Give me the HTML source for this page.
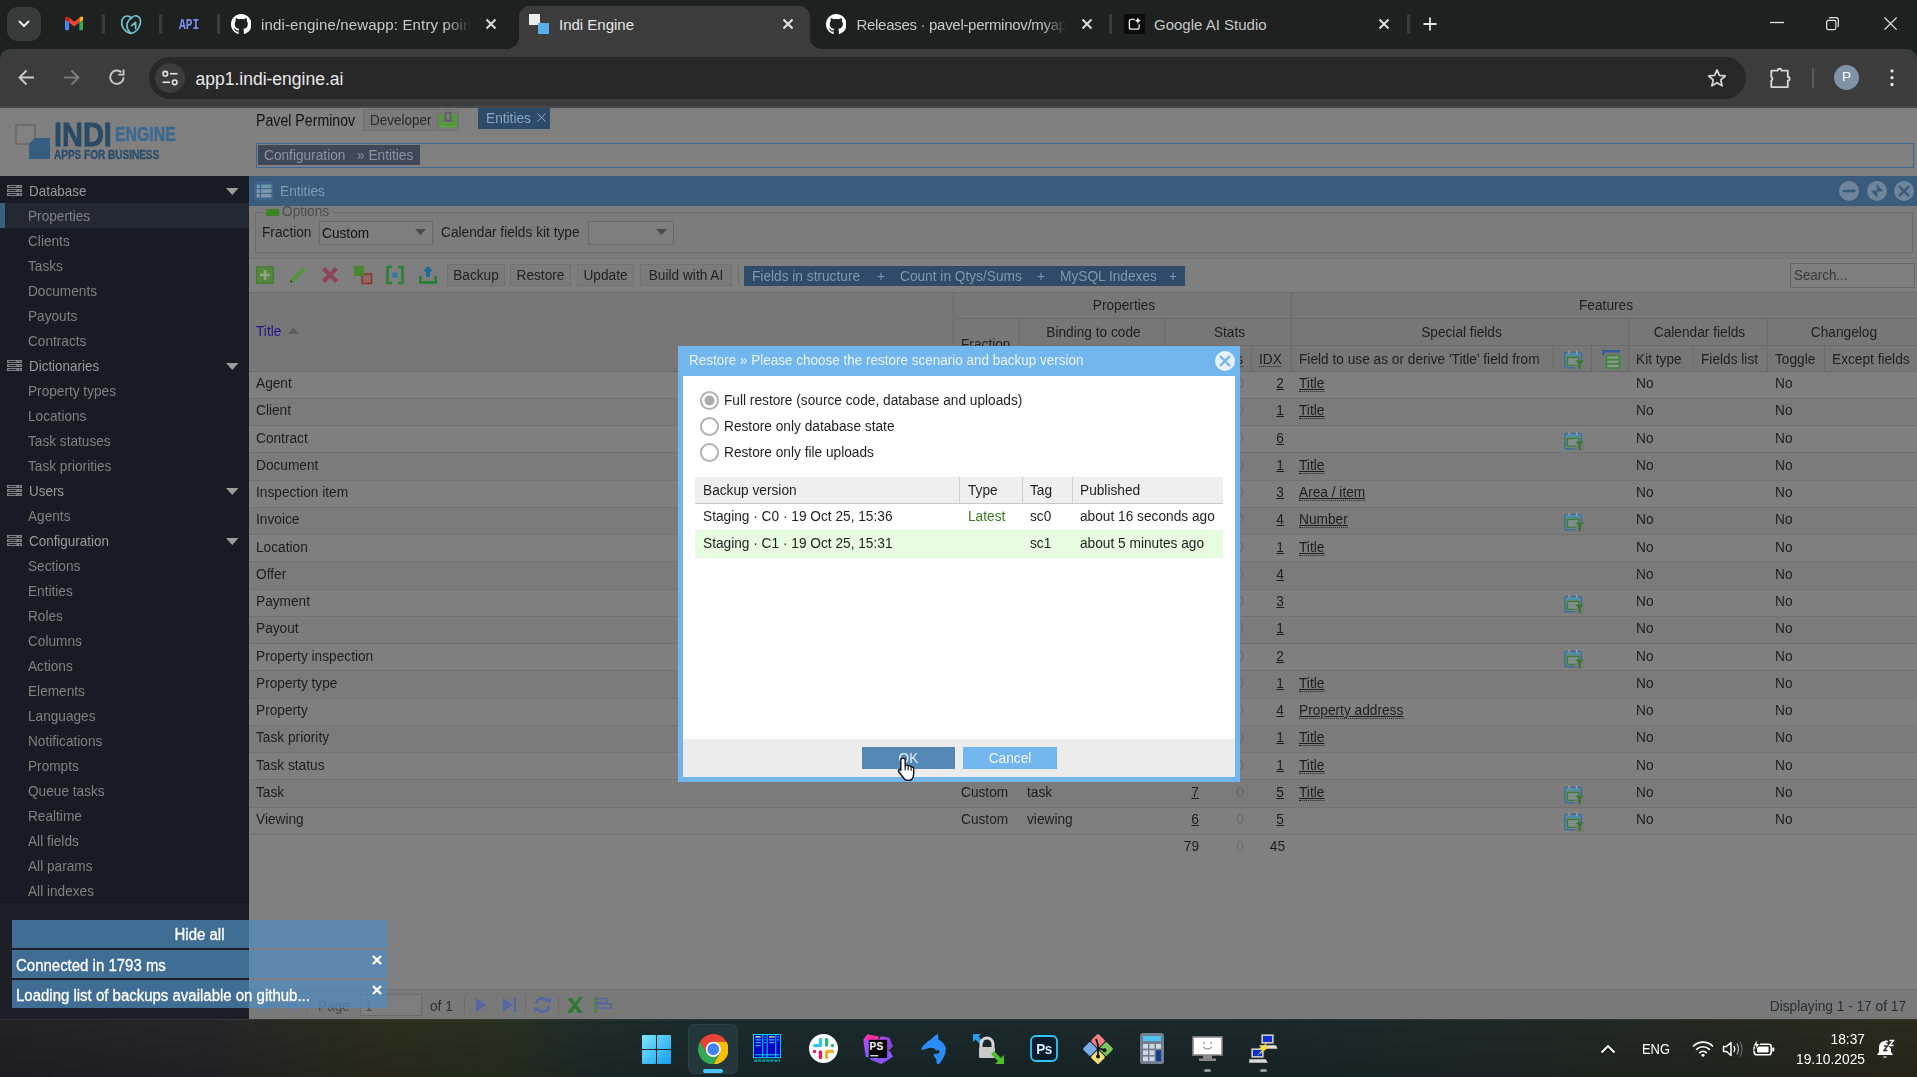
<!DOCTYPE html>
<html lang="en"><head><meta charset="utf-8"><title>Indi Engine</title>
<style>
*{box-sizing:border-box;margin:0;padding:0}
html,body{width:1917px;height:1077px;overflow:hidden;background:#808080}
body{position:relative;font-family:"Liberation Sans",sans-serif;font-size:14px;letter-spacing:0;color:#1e1e1e}
.abs,.abs *{position:absolute}
div,span,svg{position:absolute}
.t{white-space:nowrap;line-height:20px;height:20px;transform:scaleX(.978);transform-origin:0 50%}
.t[style*="text-align:center"]{transform-origin:50% 50%}
.t[style*="text-align:right"]{transform-origin:100% 50%}
/* chrome */
#tabstrip{left:0;top:0;width:1917px;height:49px;background:#1f2020}
#toolbar{left:0;top:49px;width:1917px;height:59px;background:#3c3c3c}
.ct{font-size:15px;letter-spacing:0;color:#c7c7c7;white-space:nowrap;line-height:20px;height:20px;overflow:hidden}
.tdiv{width:3px;height:20px;top:14px;background:#3b3d3d;border-radius:1.5px}
/* app */
#app{left:0;top:0;width:1917px;height:1019px;background:#808080;overflow:hidden}
#side{left:0;top:176px;width:249px;height:843px;background:#181b23}
.sg{left:0;width:249px;height:27px;background:#161922}
.sg .t,.si .t{color:#8c8c8c;font-size:15px}
.si{left:0;width:249px;height:25px}
.sgt{color:#9a9a9a;font-size:14.6px;transform:scaleX(.92)}
.sit{color:#808080;font-size:14.6px;transform:scaleX(.935)}
.h{color:#202020}
.c{color:#1d1d1d}
.bt{color:#8098ae}
.d{color:#1f1f1f}
.toast{background:rgba(78,140,190,.72)}
.tt{color:#fff;font-size:16px;transform:scaleX(.936);-webkit-text-stroke:.3px #fff}
.tb{color:#fff;font-size:14.5px;transform:scaleX(.95)}
u{text-decoration:underline}
</style></head><body>
<div id="app">
<div style="left:15px;top:124px;width:21px;height:21px;border:2px solid #6c6c6c;background:#818181"></div>
<div style="left:29px;top:138px;width:21px;height:21px;background:#365e82;clip-path:polygon(28% 0,100% 0,100% 100%,0 100%,0 28%)"></div>
<div class="t lg" style="left:54px;top:119px;font-size:34px;line-height:30px;height:30px;font-weight:bold;color:#2a4a66;-webkit-text-stroke:.9px #2a4a66;letter-spacing:0;transform:scaleX(.85);transform-origin:0 0">INDI</div>
<div class="t lg" style="left:115px;top:124px;font-size:21px;line-height:20px;height:20px;font-weight:bold;color:#3a6890;-webkit-text-stroke:.5px #3a6890;letter-spacing:0;transform:scaleX(.755);transform-origin:0 0">ENGINE</div>
<div class="t lg" style="left:54px;top:148px;font-size:12px;line-height:14px;height:14px;font-weight:bold;color:#2b4d6a;-webkit-text-stroke:.35px #2b4d6a;letter-spacing:0;transform:scaleX(.835);transform-origin:0 0">APPS FOR BUSINESS</div>
<div id="side"></div>
<svg style="left:7px;top:185px" width="15" height="11" viewBox="0 0 15 11"><g fill="#808080"><rect x="0" y="0" width="15" height="3"/><rect x="0" y="4" width="15" height="3"/><rect x="0" y="8" width="15" height="3"/></g><path d="M1.6 1.5H9.4M12 1.5H13.2M1.6 5.5H9.4M12 5.5H13.2M1.6 9.5H9.4M12 9.5H13.2" stroke="#1c1f27" stroke-width="1"/></svg>
<div class="t sgt" style="left:29px;top:181px">Database</div>
<svg style="left:225.5px;top:187.5px" width="12.5" height="7" viewBox="0 0 12.5 7"><path d="M0 0H12.5L6.25 7Z" fill="#9c9c9c"/></svg>
<div class="si" style="top:203px;background:#242832"></div><div style="left:0;top:203px;width:5px;height:25px;background:#3a6080"></div>
<div class="t sit" style="left:28px;top:205.5px">Properties</div>
<div class="t sit" style="left:28px;top:230.5px">Clients</div>
<div class="t sit" style="left:28px;top:255.5px">Tasks</div>
<div class="t sit" style="left:28px;top:280.5px">Documents</div>
<div class="t sit" style="left:28px;top:305.5px">Payouts</div>
<div class="t sit" style="left:28px;top:330.5px">Contracts</div>
<svg style="left:7px;top:360px" width="15" height="11" viewBox="0 0 15 11"><g fill="#808080"><rect x="0" y="0" width="15" height="3"/><rect x="0" y="4" width="15" height="3"/><rect x="0" y="8" width="15" height="3"/></g><path d="M1.6 1.5H9.4M12 1.5H13.2M1.6 5.5H9.4M12 5.5H13.2M1.6 9.5H9.4M12 9.5H13.2" stroke="#1c1f27" stroke-width="1"/></svg>
<div class="t sgt" style="left:29px;top:356px">Dictionaries</div>
<svg style="left:225.5px;top:362.5px" width="12.5" height="7" viewBox="0 0 12.5 7"><path d="M0 0H12.5L6.25 7Z" fill="#9c9c9c"/></svg>
<div class="t sit" style="left:28px;top:380.5px">Property types</div>
<div class="t sit" style="left:28px;top:405.5px">Locations</div>
<div class="t sit" style="left:28px;top:430.5px">Task statuses</div>
<div class="t sit" style="left:28px;top:455.5px">Task priorities</div>
<svg style="left:7px;top:485px" width="15" height="11" viewBox="0 0 15 11"><g fill="#808080"><rect x="0" y="0" width="15" height="3"/><rect x="0" y="4" width="15" height="3"/><rect x="0" y="8" width="15" height="3"/></g><path d="M1.6 1.5H9.4M12 1.5H13.2M1.6 5.5H9.4M12 5.5H13.2M1.6 9.5H9.4M12 9.5H13.2" stroke="#1c1f27" stroke-width="1"/></svg>
<div class="t sgt" style="left:29px;top:481px">Users</div>
<svg style="left:225.5px;top:487.5px" width="12.5" height="7" viewBox="0 0 12.5 7"><path d="M0 0H12.5L6.25 7Z" fill="#9c9c9c"/></svg>
<div class="t sit" style="left:28px;top:505.5px">Agents</div>
<svg style="left:7px;top:535px" width="15" height="11" viewBox="0 0 15 11"><g fill="#808080"><rect x="0" y="0" width="15" height="3"/><rect x="0" y="4" width="15" height="3"/><rect x="0" y="8" width="15" height="3"/></g><path d="M1.6 1.5H9.4M12 1.5H13.2M1.6 5.5H9.4M12 5.5H13.2M1.6 9.5H9.4M12 9.5H13.2" stroke="#1c1f27" stroke-width="1"/></svg>
<div class="t sgt" style="left:29px;top:531px">Configuration</div>
<svg style="left:225.5px;top:537.5px" width="12.5" height="7" viewBox="0 0 12.5 7"><path d="M0 0H12.5L6.25 7Z" fill="#9c9c9c"/></svg>
<div class="t sit" style="left:28px;top:555.5px">Sections</div>
<div class="t sit" style="left:28px;top:580.5px">Entities</div>
<div class="t sit" style="left:28px;top:605.5px">Roles</div>
<div class="t sit" style="left:28px;top:630.5px">Columns</div>
<div class="t sit" style="left:28px;top:655.5px">Actions</div>
<div class="t sit" style="left:28px;top:680.5px">Elements</div>
<div class="t sit" style="left:28px;top:705.5px">Languages</div>
<div class="t sit" style="left:28px;top:730.5px">Notifications</div>
<div class="t sit" style="left:28px;top:755.5px">Prompts</div>
<div class="t sit" style="left:28px;top:780.5px">Queue tasks</div>
<div class="t sit" style="left:28px;top:805.5px">Realtime</div>
<div class="t sit" style="left:28px;top:830.5px">All fields</div>
<div class="t sit" style="left:28px;top:855.5px">All params</div>
<div class="t sit" style="left:28px;top:880.5px">All indexes</div>
<div style="left:0;top:903px;width:249px;height:116px;background:#1c1f28"></div>
<div class="t" style="left:256px;top:111px;color:#131313;font-size:16px;transform:scaleX(.885)">Pavel Perminov</div>
<div style="left:363px;top:109px;width:96px;height:22px;border:1px solid #717171;background:#7a7a7a"></div>
<div class="t" style="left:370px;top:110px;color:#2a2a2a;transform:scaleX(.964)">Developer</div>
<div style="left:437px;top:110px;width:1px;height:20px;background:#747474"></div>
<svg style="left:439px;top:111px" width="18" height="18" viewBox="0 0 18 18"><path d="M0 3.5H4.6V12H13.4V3.5H18V16.5H0Z" fill="#4f9b36"/><path d="M1 15.5H17" stroke="#66aa4e" stroke-width="1"/><rect x="6.3" y="1.3" width="5.4" height="8.6" fill="#6d6d6d" stroke="#585858" stroke-width="1"/><rect x="8.2" y="2.6" width="1.6" height="5.6" fill="#848484"/></svg>
<div style="left:478px;top:108px;width:72px;height:21px;background:#2c4b67"></div>
<div class="t" style="left:485.5px;top:108px;color:#8aa5bd">Entities</div>
<svg style="left:536.5px;top:112.5px" width="9" height="9" viewBox="0 0 9 9"><path d="M.5 .5L8.5 8.5M8.5 .5L.5 8.5" stroke="#8ea6bb" stroke-width="1"/></svg>
<div style="left:256px;top:143px;width:1658px;height:25px;border:1px solid #3c6896"></div>
<div style="left:258px;top:145px;width:162px;height:20px;background:#404757"></div>
<div class="t" style="left:264px;top:144.5px;color:#8c94a2">Configuration</div>
<div class="t" style="left:356.5px;top:144.5px;color:#8c94a2">» Entities</div>
<div style="left:249px;top:176px;width:1668px;height:30px;background:#395c7c"></div>
<svg style="left:255px;top:182px" width="18" height="18" viewBox="0 0 18 18"><rect x=".5" y=".5" width="17" height="17" rx="1" fill="#40628a" stroke="#456797"/><g fill="#8197ae"><rect x="1.6" y="2.6" width="3.2" height="3.6" fill="#6f96a6"/><rect x="6" y="2.6" width="10.4" height="3.6" fill="#6f96a6"/><rect x="1.6" y="7.3" width="3.2" height="3.6"/><rect x="6" y="7.3" width="10.4" height="3.6"/><rect x="1.6" y="12" width="3.2" height="3.6"/><rect x="6" y="12" width="10.4" height="3.6"/></g></svg>
<div class="t" style="left:280px;top:181px;color:#7f9cb7">Entities</div>
<svg style="left:1838px;top:180px" width="22" height="22" viewBox="0 0 22 22"><circle cx="11" cy="11" r="10" fill="#70859b"/><rect x="4.5" y="9.7" width="13" height="2.6" fill="#395c7c"/></svg>
<svg style="left:1866px;top:180px" width="22" height="22" viewBox="0 0 22 22"><circle cx="11" cy="11" r="10" fill="#70859b"/><path d="M11 4.2 L16.8 11 L11 11 Z M11 17.8 L5.2 11 L11 11 Z" fill="#395c7c"/><path d="M11 4.2V17.8M5.2 11H16.8" stroke="#395c7c" stroke-width=".7"/></svg>
<svg style="left:1893px;top:180px" width="22" height="22" viewBox="0 0 22 22"><circle cx="11" cy="11" r="10" fill="#70859b"/><path d="M6 6L16 16M16 6L6 16" stroke="#395c7c" stroke-width="2.4"/></svg>
<div style="left:249px;top:206px;width:1668px;height:52px;background:#7c7c7c"></div><div style="left:255px;top:212px;width:1658px;height:41px;border:1px solid #6c6c6c"></div>
<div style="left:262px;top:207px;width:72px;height:12px;background:#7c7c7c"></div>
<div style="left:266px;top:209px;width:13px;height:7px;background:#3f8527"></div>
<div class="t" style="left:282px;top:201px;color:#4e4e4e">Options</div>
<div class="t" style="left:262px;top:222px;color:#1c1c1c">Fraction</div>
<div style="left:319px;top:221px;width:114px;height:24px;border:1px solid #6a6a6a;background:#7e7e7e"></div>
<div class="t" style="left:322px;top:223px;color:#111">Custom</div>
<svg style="left:414.8px;top:229.3px" width="11" height="6" viewBox="0 0 11 6"><path d="M0 0H11L5.5 6Z" fill="#4a4a4a"/></svg>
<div class="t" style="left:441px;top:222px;color:#1c1c1c">Calendar fields kit type</div>
<div style="left:588px;top:221px;width:86px;height:24px;border:1px solid #6a6a6a;background:#7e7e7e"></div>
<svg style="left:656px;top:229px" width="11" height="6" viewBox="0 0 11 6"><path d="M0 0H11L5.5 6Z" fill="#4a4a4a"/></svg>
<div style="left:249px;top:258px;width:1668px;height:1px;background:#737373"></div>
<div style="left:249px;top:259px;width:1668px;height:33px;background:#7f7f7f"></div>
<div style="left:249px;top:292px;width:1668px;height:1px;background:#707070"></div>
<svg style="left:256px;top:266px" width="18" height="18" viewBox="0 0 18 18"><rect width="18" height="18" rx="1" fill="#4c7a3a"/><rect x="1.5" y="1.5" width="15" height="15" fill="#56873f"/><path d="M9 4V14M4 9H14" stroke="#8fa883" stroke-width="2.6"/></svg>
<svg style="left:289px;top:266px" width="18" height="18" viewBox="0 0 18 18"><path d="M2.5 15.5 L15 3" stroke="#56913b" stroke-width="4"/><path d="M1.2 16.4 L3.6 15.8 L1.9 14.1Z" fill="#222"/></svg>
<svg style="left:321px;top:266px" width="18" height="18" viewBox="0 0 18 18"><path d="M2.5 2.5L15.5 15.5M15.5 2.5L2.5 15.5" stroke="#8c4457" stroke-width="4"/></svg>
<svg style="left:353px;top:265px" width="20" height="20" viewBox="0 0 20 20"><rect x="9" y="9" width="9.5" height="9.5" fill="#936666" stroke="#8a3327" stroke-width="1.4"/><rect x="1" y="1" width="10" height="10" fill="#4a872c"/></svg>
<svg style="left:385px;top:265px" width="20" height="20" viewBox="0 0 20 20"><path d="M7 2H2.5V18H7M13 2H17.5V18H13" fill="none" stroke="#2c8139" stroke-width="2.6"/><rect x="7.5" y="7.5" width="5" height="5" fill="#2976a8"/></svg>
<svg style="left:418px;top:265px" width="20" height="20" viewBox="0 0 20 20"><path d="M2.3 11V17.5H17.7V11" fill="none" stroke="#2c8139" stroke-width="2.8"/><path d="M10 1L15 6.5H12V12H8V6.5H5Z" fill="#1b6a9d"/></svg>
<div style="left:447px;top:264px;width:58px;height:22px;border:1px solid #727272;background:#7b7b7b"></div><div class="t" style="left:447px;width:58px;top:265px;text-align:center;color:#222">Backup</div>
<div style="left:510px;top:264px;width:61px;height:22px;border:1px solid #727272;background:#7b7b7b"></div><div class="t" style="left:510px;width:61px;top:265px;text-align:center;color:#222">Restore</div>
<div style="left:577px;top:264px;width:57px;height:22px;border:1px solid #727272;background:#7b7b7b"></div><div class="t" style="left:577px;width:57px;top:265px;text-align:center;color:#222">Update</div>
<div style="left:640px;top:264px;width:92px;height:22px;border:1px solid #727272;background:#7b7b7b"></div><div class="t" style="left:640px;width:92px;top:265px;text-align:center;color:#222">Build with AI</div>
<div style="left:738px;top:266px;width:1px;height:18px;background:#6d6d6d"></div>
<div style="left:744px;top:266px;width:441px;height:20px;background:#2f4b68"></div>
<div class="t bt" style="left:752px;top:266px">Fields in structure</div><div class="t bt" style="left:876.5px;top:266px">+</div>
<div class="t bt" style="left:900px;top:266px">Count in Qtys/Sums</div><div class="t bt" style="left:1036.5px;top:266px">+</div>
<div class="t bt" style="left:1060px;top:266px">MySQL Indexes</div><div class="t bt" style="left:1169px;top:266px">+</div>
<div style="left:1790px;top:263px;width:125px;height:25px;border:1px solid #686868;background:#7e7e7e"></div>
<div class="t" style="left:1794px;top:265px;color:#3a3a3a;transform:scaleX(.954)">Search...</div>
<div style="left:249px;top:293px;width:1668px;height:78px;background:#777777"></div>
<div style="left:249px;top:371px;width:1668px;height:1px;background:#6a6a6a"></div>
<div style="left:953px;top:318px;width:964px;height:1px;background:#6c6c6c"></div>
<div style="left:1019px;top:345px;width:898px;height:1px;background:#6c6c6c"></div>
<div style="left:953px;top:293px;width:1px;height:78px;background:#6c6c6c"></div>
<div style="left:1291px;top:293px;width:1px;height:78px;background:#6c6c6c"></div>
<div style="left:1019px;top:318px;width:1px;height:53px;background:#6c6c6c"></div>
<div style="left:1164px;top:318px;width:1px;height:53px;background:#6c6c6c"></div>
<div style="left:1628px;top:318px;width:1px;height:53px;background:#6c6c6c"></div>
<div style="left:1767px;top:318px;width:1px;height:53px;background:#6c6c6c"></div>
<div style="left:1082px;top:345px;width:1px;height:26px;background:#6c6c6c"></div>
<div style="left:1207px;top:345px;width:1px;height:26px;background:#6c6c6c"></div>
<div style="left:1251px;top:345px;width:1px;height:26px;background:#6c6c6c"></div>
<div style="left:1553px;top:345px;width:1px;height:26px;background:#6c6c6c"></div>
<div style="left:1591px;top:345px;width:1px;height:26px;background:#6c6c6c"></div>
<div style="left:1693px;top:345px;width:1px;height:26px;background:#6c6c6c"></div>
<div style="left:1824px;top:345px;width:1px;height:26px;background:#6c6c6c"></div>
<div class="t h" style="left:256px;top:321px;color:#24128a">Title</div>
<svg style="left:288.3px;top:328.2px" width="11" height="6" viewBox="0 0 11 6"><path d="M0 6H11L5.5 0Z" fill="#5d5d5d"/></svg>
<div class="t h" style="left:955px;width:338px;top:295px;text-align:center;">Properties</div>
<div class="t h" style="left:1293px;width:626px;top:295px;text-align:center;">Features</div>
<div class="t h" style="left:961px;top:334px;">Fraction</div>
<div class="t h" style="left:1021px;width:145px;top:322px;text-align:center;">Binding to code</div>
<div class="t h" style="left:1166px;width:127px;top:322px;text-align:center;">Stats</div>
<div class="t h" style="left:1293px;width:337px;top:322px;text-align:center;">Special fields</div>
<div class="t h" style="left:1630px;width:139px;top:322px;text-align:center;">Calendar fields</div>
<div class="t h" style="left:1769px;width:150px;top:322px;text-align:center;">Changelog</div>
<div class="t h" style="left:1027px;top:349px;">Table</div>
<div class="t h" style="left:1090px;top:349px;">Type</div>
<div class="t h" style="left:1172px;top:349px;">Fields</div>
<div class="t h" style="left:1215px;top:349px;border-bottom:1px dotted #222;height:18px">Qtys</div>
<div class="t h" style="left:1259px;top:349px;border-bottom:1px dotted #222;height:18px">IDX</div>
<div class="t h" style="left:1299px;top:349px;">Field to use as or derive 'Title' field from</div>
<div class="t h" style="left:1636px;top:349px;">Kit type</div>
<div class="t h" style="left:1701px;top:349px;">Fields list</div>
<div class="t h" style="left:1775px;top:349px;">Toggle</div>
<div class="t h" style="left:1832px;top:349px;">Except fields</div>
<svg style="left:1564px;top:349.5px" width="20" height="20" viewBox="0 0 20 20"><rect x="0.9" y="2.6" width="16.4" height="15.2" rx="1.2" fill="#7f878d" stroke="#3f6c9e" stroke-width="1.5"/><rect x="1.7" y="3.4" width="14.8" height="2.6" fill="#4a8ea6"/><rect x="3.4" y="7.4" width="11.6" height="8" fill="#86918c" stroke="#3b7d33" stroke-width="1.5"/><path d="M5 11.5H13M9 8V15" stroke="#7a8a8e" stroke-width="1"/><path d="M5.2 0.6V4M12.8 0.6V4" stroke="#9c9c9c" stroke-width="1.5"/><rect x="10.8" y="13.4" width="9" height="6.6" fill="#797979"/><path d="M11.4 10.4H19.8L16.8 13.8V19.6L14.4 18.2V13.8Z" fill="#357a2d"/></svg>
<svg style="left:1601px;top:349px" width="20" height="20" viewBox="0 0 20 20"><path d="M1 1H19V3.5H3.5V6H1Z" fill="#335f99"/><rect x="5.5" y="6.5" width="13" height="12.5" fill="#8a968a" stroke="#3b883a" stroke-width="1.6"/><path d="M5.5 10.6H18.5M5.5 14.8H18.5" stroke="#3b883a" stroke-width="1.8"/></svg>
<div style="left:249px;top:371.5px;width:1668px;height:27.25px;background:#7f7f7f;border-bottom:1px solid #727272"></div>
<div class="t c" style="left:256px;top:373.0px;">Agent</div>
<div class="t c" style="left:961px;top:373.0px;">Custom</div>
<div class="t c" style="left:1027px;top:373.0px;">agent</div>
<div class="t c" style="left:1139px;width:60px;text-align:right;top:373.0px;"><u>3</u></div>
<div class="t c" style="left:1184px;width:60px;text-align:right;top:373.0px;color:#6b6b6b">0</div>
<div class="t c" style="left:1224px;width:60px;text-align:right;top:373.0px;"><u>2</u></div>
<div class="t c" style="left:1299px;top:373.0px;text-decoration:underline;border-bottom:1px dotted #222;height:19px">Title</div>
<div class="t c" style="left:1636px;top:373.0px;">No</div>
<div class="t c" style="left:1775px;top:373.0px;">No</div>
<div style="left:249px;top:398.75px;width:1668px;height:27.25px;background:#7b7b7b;border-bottom:1px solid #727272"></div>
<div class="t c" style="left:256px;top:400.25px;">Client</div>
<div class="t c" style="left:961px;top:400.25px;">Custom</div>
<div class="t c" style="left:1027px;top:400.25px;">client</div>
<div class="t c" style="left:1139px;width:60px;text-align:right;top:400.25px;"><u>6</u></div>
<div class="t c" style="left:1184px;width:60px;text-align:right;top:400.25px;color:#6b6b6b">0</div>
<div class="t c" style="left:1224px;width:60px;text-align:right;top:400.25px;"><u>1</u></div>
<div class="t c" style="left:1299px;top:400.25px;text-decoration:underline;border-bottom:1px dotted #222;height:19px">Title</div>
<div class="t c" style="left:1636px;top:400.25px;">No</div>
<div class="t c" style="left:1775px;top:400.25px;">No</div>
<div style="left:249px;top:426.0px;width:1668px;height:27.25px;background:#7f7f7f;border-bottom:1px solid #727272"></div>
<div class="t c" style="left:256px;top:427.5px;">Contract</div>
<div class="t c" style="left:961px;top:427.5px;">Custom</div>
<div class="t c" style="left:1027px;top:427.5px;">contract</div>
<div class="t c" style="left:1139px;width:60px;text-align:right;top:427.5px;"><u>9</u></div>
<div class="t c" style="left:1184px;width:60px;text-align:right;top:427.5px;color:#6b6b6b">0</div>
<div class="t c" style="left:1224px;width:60px;text-align:right;top:427.5px;"><u>6</u></div>
<svg style="left:1564px;top:430.5px" width="20" height="20" viewBox="0 0 20 20"><rect x="0.9" y="2.6" width="16.4" height="15.2" rx="1.2" fill="#7f878d" stroke="#3f6c9e" stroke-width="1.5"/><rect x="1.7" y="3.4" width="14.8" height="2.6" fill="#4a8ea6"/><rect x="3.4" y="7.4" width="11.6" height="8" fill="#86918c" stroke="#3b7d33" stroke-width="1.5"/><path d="M5 11.5H13M9 8V15" stroke="#7a8a8e" stroke-width="1"/><path d="M5.2 0.6V4M12.8 0.6V4" stroke="#9c9c9c" stroke-width="1.5"/><rect x="10.8" y="13.4" width="9" height="6.6" fill="#797979"/><path d="M11.4 10.4H19.8L16.8 13.8V19.6L14.4 18.2V13.8Z" fill="#357a2d"/></svg>
<div class="t c" style="left:1636px;top:427.5px;">No</div>
<div class="t c" style="left:1775px;top:427.5px;">No</div>
<div style="left:249px;top:453.25px;width:1668px;height:27.25px;background:#7b7b7b;border-bottom:1px solid #727272"></div>
<div class="t c" style="left:256px;top:454.75px;">Document</div>
<div class="t c" style="left:961px;top:454.75px;">Custom</div>
<div class="t c" style="left:1027px;top:454.75px;">document</div>
<div class="t c" style="left:1139px;width:60px;text-align:right;top:454.75px;"><u>5</u></div>
<div class="t c" style="left:1184px;width:60px;text-align:right;top:454.75px;color:#6b6b6b">0</div>
<div class="t c" style="left:1224px;width:60px;text-align:right;top:454.75px;"><u>1</u></div>
<div class="t c" style="left:1299px;top:454.75px;text-decoration:underline;border-bottom:1px dotted #222;height:19px">Title</div>
<div class="t c" style="left:1636px;top:454.75px;">No</div>
<div class="t c" style="left:1775px;top:454.75px;">No</div>
<div style="left:249px;top:480.5px;width:1668px;height:27.25px;background:#7f7f7f;border-bottom:1px solid #727272"></div>
<div class="t c" style="left:256px;top:482.0px;">Inspection item</div>
<div class="t c" style="left:961px;top:482.0px;">Custom</div>
<div class="t c" style="left:1027px;top:482.0px;">inspectionItem</div>
<div class="t c" style="left:1139px;width:60px;text-align:right;top:482.0px;"><u>5</u></div>
<div class="t c" style="left:1184px;width:60px;text-align:right;top:482.0px;color:#6b6b6b">0</div>
<div class="t c" style="left:1224px;width:60px;text-align:right;top:482.0px;"><u>3</u></div>
<div class="t c" style="left:1299px;top:482.0px;text-decoration:underline;border-bottom:1px dotted #222;height:19px">Area / item</div>
<div class="t c" style="left:1636px;top:482.0px;">No</div>
<div class="t c" style="left:1775px;top:482.0px;">No</div>
<div style="left:249px;top:507.75px;width:1668px;height:27.25px;background:#7b7b7b;border-bottom:1px solid #727272"></div>
<div class="t c" style="left:256px;top:509.25px;">Invoice</div>
<div class="t c" style="left:961px;top:509.25px;">Custom</div>
<div class="t c" style="left:1027px;top:509.25px;">invoice</div>
<div class="t c" style="left:1139px;width:60px;text-align:right;top:509.25px;"><u>8</u></div>
<div class="t c" style="left:1184px;width:60px;text-align:right;top:509.25px;color:#6b6b6b">0</div>
<div class="t c" style="left:1224px;width:60px;text-align:right;top:509.25px;"><u>4</u></div>
<div class="t c" style="left:1299px;top:509.25px;text-decoration:underline;border-bottom:1px dotted #222;height:19px">Number</div>
<svg style="left:1564px;top:512.25px" width="20" height="20" viewBox="0 0 20 20"><rect x="0.9" y="2.6" width="16.4" height="15.2" rx="1.2" fill="#7f878d" stroke="#3f6c9e" stroke-width="1.5"/><rect x="1.7" y="3.4" width="14.8" height="2.6" fill="#4a8ea6"/><rect x="3.4" y="7.4" width="11.6" height="8" fill="#86918c" stroke="#3b7d33" stroke-width="1.5"/><path d="M5 11.5H13M9 8V15" stroke="#7a8a8e" stroke-width="1"/><path d="M5.2 0.6V4M12.8 0.6V4" stroke="#9c9c9c" stroke-width="1.5"/><rect x="10.8" y="13.4" width="9" height="6.6" fill="#797979"/><path d="M11.4 10.4H19.8L16.8 13.8V19.6L14.4 18.2V13.8Z" fill="#357a2d"/></svg>
<div class="t c" style="left:1636px;top:509.25px;">No</div>
<div class="t c" style="left:1775px;top:509.25px;">No</div>
<div style="left:249px;top:535.0px;width:1668px;height:27.25px;background:#7f7f7f;border-bottom:1px solid #727272"></div>
<div class="t c" style="left:256px;top:536.5px;">Location</div>
<div class="t c" style="left:961px;top:536.5px;">Custom</div>
<div class="t c" style="left:1027px;top:536.5px;">location</div>
<div class="t c" style="left:1139px;width:60px;text-align:right;top:536.5px;"><u>1</u></div>
<div class="t c" style="left:1184px;width:60px;text-align:right;top:536.5px;color:#6b6b6b">0</div>
<div class="t c" style="left:1224px;width:60px;text-align:right;top:536.5px;"><u>1</u></div>
<div class="t c" style="left:1299px;top:536.5px;text-decoration:underline;border-bottom:1px dotted #222;height:19px">Title</div>
<div class="t c" style="left:1636px;top:536.5px;">No</div>
<div class="t c" style="left:1775px;top:536.5px;">No</div>
<div style="left:249px;top:562.25px;width:1668px;height:27.25px;background:#7b7b7b;border-bottom:1px solid #727272"></div>
<div class="t c" style="left:256px;top:563.75px;">Offer</div>
<div class="t c" style="left:961px;top:563.75px;">Custom</div>
<div class="t c" style="left:1027px;top:563.75px;">offer</div>
<div class="t c" style="left:1139px;width:60px;text-align:right;top:563.75px;"><u>7</u></div>
<div class="t c" style="left:1184px;width:60px;text-align:right;top:563.75px;color:#6b6b6b">0</div>
<div class="t c" style="left:1224px;width:60px;text-align:right;top:563.75px;"><u>4</u></div>
<div class="t c" style="left:1636px;top:563.75px;">No</div>
<div class="t c" style="left:1775px;top:563.75px;">No</div>
<div style="left:249px;top:589.5px;width:1668px;height:27.25px;background:#7f7f7f;border-bottom:1px solid #727272"></div>
<div class="t c" style="left:256px;top:591.0px;">Payment</div>
<div class="t c" style="left:961px;top:591.0px;">Custom</div>
<div class="t c" style="left:1027px;top:591.0px;">payment</div>
<div class="t c" style="left:1139px;width:60px;text-align:right;top:591.0px;"><u>6</u></div>
<div class="t c" style="left:1184px;width:60px;text-align:right;top:591.0px;color:#6b6b6b">0</div>
<div class="t c" style="left:1224px;width:60px;text-align:right;top:591.0px;"><u>3</u></div>
<svg style="left:1564px;top:594.0px" width="20" height="20" viewBox="0 0 20 20"><rect x="0.9" y="2.6" width="16.4" height="15.2" rx="1.2" fill="#7f878d" stroke="#3f6c9e" stroke-width="1.5"/><rect x="1.7" y="3.4" width="14.8" height="2.6" fill="#4a8ea6"/><rect x="3.4" y="7.4" width="11.6" height="8" fill="#86918c" stroke="#3b7d33" stroke-width="1.5"/><path d="M5 11.5H13M9 8V15" stroke="#7a8a8e" stroke-width="1"/><path d="M5.2 0.6V4M12.8 0.6V4" stroke="#9c9c9c" stroke-width="1.5"/><rect x="10.8" y="13.4" width="9" height="6.6" fill="#797979"/><path d="M11.4 10.4H19.8L16.8 13.8V19.6L14.4 18.2V13.8Z" fill="#357a2d"/></svg>
<div class="t c" style="left:1636px;top:591.0px;">No</div>
<div class="t c" style="left:1775px;top:591.0px;">No</div>
<div style="left:249px;top:616.75px;width:1668px;height:27.25px;background:#7b7b7b;border-bottom:1px solid #727272"></div>
<div class="t c" style="left:256px;top:618.25px;">Payout</div>
<div class="t c" style="left:961px;top:618.25px;">Custom</div>
<div class="t c" style="left:1027px;top:618.25px;">payout</div>
<div class="t c" style="left:1139px;width:60px;text-align:right;top:618.25px;"><u>4</u></div>
<div class="t c" style="left:1184px;width:60px;text-align:right;top:618.25px;color:#6b6b6b">0</div>
<div class="t c" style="left:1224px;width:60px;text-align:right;top:618.25px;"><u>1</u></div>
<div class="t c" style="left:1636px;top:618.25px;">No</div>
<div class="t c" style="left:1775px;top:618.25px;">No</div>
<div style="left:249px;top:644.0px;width:1668px;height:27.25px;background:#7f7f7f;border-bottom:1px solid #727272"></div>
<div class="t c" style="left:256px;top:645.5px;">Property inspection</div>
<div class="t c" style="left:961px;top:645.5px;">Custom</div>
<div class="t c" style="left:1027px;top:645.5px;">propertyInspection</div>
<div class="t c" style="left:1139px;width:60px;text-align:right;top:645.5px;"><u>5</u></div>
<div class="t c" style="left:1184px;width:60px;text-align:right;top:645.5px;color:#6b6b6b">0</div>
<div class="t c" style="left:1224px;width:60px;text-align:right;top:645.5px;"><u>2</u></div>
<svg style="left:1564px;top:648.5px" width="20" height="20" viewBox="0 0 20 20"><rect x="0.9" y="2.6" width="16.4" height="15.2" rx="1.2" fill="#7f878d" stroke="#3f6c9e" stroke-width="1.5"/><rect x="1.7" y="3.4" width="14.8" height="2.6" fill="#4a8ea6"/><rect x="3.4" y="7.4" width="11.6" height="8" fill="#86918c" stroke="#3b7d33" stroke-width="1.5"/><path d="M5 11.5H13M9 8V15" stroke="#7a8a8e" stroke-width="1"/><path d="M5.2 0.6V4M12.8 0.6V4" stroke="#9c9c9c" stroke-width="1.5"/><rect x="10.8" y="13.4" width="9" height="6.6" fill="#797979"/><path d="M11.4 10.4H19.8L16.8 13.8V19.6L14.4 18.2V13.8Z" fill="#357a2d"/></svg>
<div class="t c" style="left:1636px;top:645.5px;">No</div>
<div class="t c" style="left:1775px;top:645.5px;">No</div>
<div style="left:249px;top:671.25px;width:1668px;height:27.25px;background:#7b7b7b;border-bottom:1px solid #727272"></div>
<div class="t c" style="left:256px;top:672.75px;">Property type</div>
<div class="t c" style="left:961px;top:672.75px;">Custom</div>
<div class="t c" style="left:1027px;top:672.75px;">propertyType</div>
<div class="t c" style="left:1139px;width:60px;text-align:right;top:672.75px;"><u>1</u></div>
<div class="t c" style="left:1184px;width:60px;text-align:right;top:672.75px;color:#6b6b6b">0</div>
<div class="t c" style="left:1224px;width:60px;text-align:right;top:672.75px;"><u>1</u></div>
<div class="t c" style="left:1299px;top:672.75px;text-decoration:underline;border-bottom:1px dotted #222;height:19px">Title</div>
<div class="t c" style="left:1636px;top:672.75px;">No</div>
<div class="t c" style="left:1775px;top:672.75px;">No</div>
<div style="left:249px;top:698.5px;width:1668px;height:27.25px;background:#7f7f7f;border-bottom:1px solid #727272"></div>
<div class="t c" style="left:256px;top:700.0px;">Property</div>
<div class="t c" style="left:961px;top:700.0px;">Custom</div>
<div class="t c" style="left:1027px;top:700.0px;">property</div>
<div class="t c" style="left:1139px;width:60px;text-align:right;top:700.0px;"><u>9</u></div>
<div class="t c" style="left:1184px;width:60px;text-align:right;top:700.0px;color:#6b6b6b">0</div>
<div class="t c" style="left:1224px;width:60px;text-align:right;top:700.0px;"><u>4</u></div>
<div class="t c" style="left:1299px;top:700.0px;text-decoration:underline;border-bottom:1px dotted #222;height:19px">Property address</div>
<div class="t c" style="left:1636px;top:700.0px;">No</div>
<div class="t c" style="left:1775px;top:700.0px;">No</div>
<div style="left:249px;top:725.75px;width:1668px;height:27.25px;background:#7b7b7b;border-bottom:1px solid #727272"></div>
<div class="t c" style="left:256px;top:727.25px;">Task priority</div>
<div class="t c" style="left:961px;top:727.25px;">Custom</div>
<div class="t c" style="left:1027px;top:727.25px;">taskPriority</div>
<div class="t c" style="left:1139px;width:60px;text-align:right;top:727.25px;"><u>1</u></div>
<div class="t c" style="left:1184px;width:60px;text-align:right;top:727.25px;color:#6b6b6b">0</div>
<div class="t c" style="left:1224px;width:60px;text-align:right;top:727.25px;"><u>1</u></div>
<div class="t c" style="left:1299px;top:727.25px;text-decoration:underline;border-bottom:1px dotted #222;height:19px">Title</div>
<div class="t c" style="left:1636px;top:727.25px;">No</div>
<div class="t c" style="left:1775px;top:727.25px;">No</div>
<div style="left:249px;top:753.0px;width:1668px;height:27.25px;background:#7f7f7f;border-bottom:1px solid #727272"></div>
<div class="t c" style="left:256px;top:754.5px;">Task status</div>
<div class="t c" style="left:961px;top:754.5px;">Custom</div>
<div class="t c" style="left:1027px;top:754.5px;">taskStatus</div>
<div class="t c" style="left:1139px;width:60px;text-align:right;top:754.5px;"><u>1</u></div>
<div class="t c" style="left:1184px;width:60px;text-align:right;top:754.5px;color:#6b6b6b">0</div>
<div class="t c" style="left:1224px;width:60px;text-align:right;top:754.5px;"><u>1</u></div>
<div class="t c" style="left:1299px;top:754.5px;text-decoration:underline;border-bottom:1px dotted #222;height:19px">Title</div>
<div class="t c" style="left:1636px;top:754.5px;">No</div>
<div class="t c" style="left:1775px;top:754.5px;">No</div>
<div style="left:249px;top:780.25px;width:1668px;height:27.25px;background:#7b7b7b;border-bottom:1px solid #727272"></div>
<div class="t c" style="left:256px;top:781.75px;">Task</div>
<div class="t c" style="left:961px;top:781.75px;">Custom</div>
<div class="t c" style="left:1027px;top:781.75px;">task</div>
<div class="t c" style="left:1139px;width:60px;text-align:right;top:781.75px;"><u>7</u></div>
<div class="t c" style="left:1184px;width:60px;text-align:right;top:781.75px;color:#6b6b6b">0</div>
<div class="t c" style="left:1224px;width:60px;text-align:right;top:781.75px;"><u>5</u></div>
<div class="t c" style="left:1299px;top:781.75px;text-decoration:underline;border-bottom:1px dotted #222;height:19px">Title</div>
<svg style="left:1564px;top:784.75px" width="20" height="20" viewBox="0 0 20 20"><rect x="0.9" y="2.6" width="16.4" height="15.2" rx="1.2" fill="#7f878d" stroke="#3f6c9e" stroke-width="1.5"/><rect x="1.7" y="3.4" width="14.8" height="2.6" fill="#4a8ea6"/><rect x="3.4" y="7.4" width="11.6" height="8" fill="#86918c" stroke="#3b7d33" stroke-width="1.5"/><path d="M5 11.5H13M9 8V15" stroke="#7a8a8e" stroke-width="1"/><path d="M5.2 0.6V4M12.8 0.6V4" stroke="#9c9c9c" stroke-width="1.5"/><rect x="10.8" y="13.4" width="9" height="6.6" fill="#797979"/><path d="M11.4 10.4H19.8L16.8 13.8V19.6L14.4 18.2V13.8Z" fill="#357a2d"/></svg>
<div class="t c" style="left:1636px;top:781.75px;">No</div>
<div class="t c" style="left:1775px;top:781.75px;">No</div>
<div style="left:249px;top:807.5px;width:1668px;height:27.25px;background:#7f7f7f;border-bottom:1px solid #727272"></div>
<div class="t c" style="left:256px;top:809.0px;">Viewing</div>
<div class="t c" style="left:961px;top:809.0px;">Custom</div>
<div class="t c" style="left:1027px;top:809.0px;">viewing</div>
<div class="t c" style="left:1139px;width:60px;text-align:right;top:809.0px;"><u>6</u></div>
<div class="t c" style="left:1184px;width:60px;text-align:right;top:809.0px;color:#6b6b6b">0</div>
<div class="t c" style="left:1224px;width:60px;text-align:right;top:809.0px;"><u>5</u></div>
<svg style="left:1564px;top:812.0px" width="20" height="20" viewBox="0 0 20 20"><rect x="0.9" y="2.6" width="16.4" height="15.2" rx="1.2" fill="#7f878d" stroke="#3f6c9e" stroke-width="1.5"/><rect x="1.7" y="3.4" width="14.8" height="2.6" fill="#4a8ea6"/><rect x="3.4" y="7.4" width="11.6" height="8" fill="#86918c" stroke="#3b7d33" stroke-width="1.5"/><path d="M5 11.5H13M9 8V15" stroke="#7a8a8e" stroke-width="1"/><path d="M5.2 0.6V4M12.8 0.6V4" stroke="#9c9c9c" stroke-width="1.5"/><rect x="10.8" y="13.4" width="9" height="6.6" fill="#797979"/><path d="M11.4 10.4H19.8L16.8 13.8V19.6L14.4 18.2V13.8Z" fill="#357a2d"/></svg>
<div class="t c" style="left:1636px;top:809.0px;">No</div>
<div class="t c" style="left:1775px;top:809.0px;">No</div>
<div class="t c" style="left:1139px;width:60px;text-align:right;top:836.25px;">79</div>
<div class="t c" style="left:1184px;width:60px;text-align:right;top:836.25px;color:#6b6b6b">0</div>
<div class="t c" style="left:1224.5px;width:60px;text-align:right;top:836.25px;">45</div>
<div style="left:249px;top:989px;width:1668px;height:1px;background:#737373"></div>
<div style="left:249px;top:990px;width:1668px;height:29px;background:#797979"></div>
<svg style="left:257px;top:997px" width="14" height="16" viewBox="0 0 14 16"><path d="M1 1V15" stroke="#6d7aa0" stroke-width="2.4"/><path d="M13 1V15L3 8Z" fill="#6d7aa0"/></svg>
<svg style="left:285px;top:997px" width="10" height="16" viewBox="0 0 10 16"><path d="M10 1V15L0 8Z" fill="#6d7aa0"/></svg>
<div style="left:306px;top:996px;width:1px;height:18px;background:#6d6d6d"></div>
<div class="t" style="left:318px;top:996px;color:#4a4a4a">Page</div>
<div style="left:360px;top:994px;width:62px;height:22px;border:1px solid #6a6a6a;background:#7e7e7e"></div>
<div class="t" style="left:365px;top:996px;color:#4a4a4a">1</div>
<div class="t" style="left:430px;top:996px;color:#303030">of 1</div>
<div style="left:464px;top:996px;width:1px;height:18px;background:#6d6d6d"></div>
<svg style="left:476px;top:997px" width="10" height="16" viewBox="0 0 10 16"><path d="M0 1V15L10 8Z" fill="#5567a2"/></svg>
<svg style="left:502px;top:997px" width="14" height="16" viewBox="0 0 14 16"><path d="M13 1V15" stroke="#5567a2" stroke-width="2.4"/><path d="M1 1V15L11 8Z" fill="#5567a2"/></svg>
<div style="left:525px;top:996px;width:1px;height:18px;background:#6d6d6d"></div>
<svg style="left:533px;top:996px" width="19" height="18" viewBox="0 0 19 18"><path d="M3 8A6.5 6.5 0 0 1 15 5.5M16 10A6.5 6.5 0 0 1 4 12.5" fill="none" stroke="#5567a2" stroke-width="2.6"/><path d="M12 6.5H18V0.5ZM7 11.5H1V17.5Z" fill="#5567a2"/></svg>
<div style="left:558px;top:996px;width:1px;height:18px;background:#6d6d6d"></div>
<svg style="left:566px;top:996px" width="18" height="18" viewBox="0 0 18 18"><path d="M1 2H6L9 7L13 1H17L11 9L17 17H12L9 12L6 17H1L7 9Z" fill="#2f7a33"/></svg>
<svg style="left:594px;top:996px" width="18" height="18" viewBox="0 0 18 18"><path d="M1.5 1V17" stroke="#3f8a30" stroke-width="2"/><path d="M3.5 2.5H13V6.5H3.5ZM3.5 8H17V12H3.5Z" fill="none" stroke="#5567a2" stroke-width="1.6"/></svg>
<div class="t" style="left:1650px;width:256px;text-align:right;top:996px;color:#2a2c34">Displaying 1 - 17 of 17</div>
</div>
<div id="tabstrip">
  <div style="left:7px;top:7px;width:34px;height:34px;border-radius:11px;background:#393b3b"></div>
  <svg style="left:17px;top:18px" width="14" height="12" viewBox="0 0 14 12"><path d="M2.5 3.5 L7 8 L11.5 3.5" fill="none" stroke="#e8e8e8" stroke-width="2" stroke-linecap="round" stroke-linejoin="round"/></svg>
  <!-- gmail -->
  <svg style="left:64.8px;top:16.4px" width="18.4" height="14.6" viewBox="0 0 19 14.6"><path d="M0 3 V13.4 Q0 14.6 1.2 14.6 H4.2 V6.2 Z" fill="#4285f4"/><path d="M19 3 V13.4 Q19 14.6 17.8 14.6 H14.8 V6.2 Z" fill="#34a853"/><path d="M14.8 1.6 L16.4 .5 Q19 -.6 19 2.4 V3.4 L14.8 6.6 Z" fill="#fbbc04"/><path d="M4.2 1.6 L2.6 .5 Q0 -.6 0 2.4 V3.4 L4.2 6.6 Z" fill="#c5221f"/><path d="M4.2 1.6 L9.5 5.6 L14.8 1.6 V6.6 L9.5 10.6 L4.2 6.6 Z" fill="#ea4335"/></svg>
  <div class="tdiv" style="left:102px"></div>
  <!-- swirl -->
  <svg style="left:120.2px;top:13.8px" width="22" height="21" viewBox="0 0 22 21"><g fill="none" stroke="#6ec4d0" stroke-width="1.7" stroke-linecap="round" stroke-linejoin="round"><path d="M11 19.3 C8 19 4.6 16.8 2.8 13.4 C1 9.8 1.4 5.4 4 3.2 C6.4 1.2 9.8 1.8 11.4 4.1 C12.6 2.4 14.4 1.5 16.4 1.8 C19.6 2.4 21 5.6 20.3 9.4 C19.4 14.4 15.6 18.6 11 19.3 Z"/><path d="M11.4 4.1 C7.4 6.4 6 11 7.6 14.8 C8.4 16.6 9.6 18.2 11 19.2"/><path d="M11.6 11.6 L15.6 8.4 V14.6"/></g></svg>
  <div class="tdiv" style="left:159px"></div>
  <div class="t" style="left:179px;top:14.8px;font-family:'Liberation Mono',monospace;font-weight:bold;font-size:14.5px;letter-spacing:0;color:#7f8ff2;transform:scaleX(.77)">API</div>
  <div class="tdiv" style="left:217px"></div>
  <!-- tab 1 github -->
  <svg class="gh" style="left:230.5px;top:13.5px" width="20.5" height="20.5" viewBox="0 0 16 16"><path fill="#fff" d="M8 0C3.58 0 0 3.58 0 8c0 3.54 2.29 6.53 5.47 7.59.4.07.55-.17.55-.38 0-.19-.01-.82-.01-1.49-2.01.37-2.53-.49-2.69-.94-.09-.23-.48-.94-.82-1.13-.28-.15-.68-.52-.01-.53.63-.01 1.08.58 1.23.82.72 1.21 1.87.87 2.33.66.07-.52.28-.87.51-1.07-1.78-.2-3.64-.89-3.64-3.95 0-.87.31-1.59.82-2.15-.08-.2-.36-1.02.08-2.12 0 0 .67-.21 2.2.82.64-.18 1.32-.27 2-.27s1.36.09 2 .27c1.53-1.04 2.2-.82 2.2-.82.44 1.1.16 1.92.08 2.12.51.56.82 1.27.82 2.15 0 3.07-1.87 3.75-3.65 3.95.29.25.54.73.54 1.48 0 1.07-.01 1.93-.01 2.2 0 .21.15.46.55.38A8.013 8.013 0 0016 8c0-4.42-3.58-8-8-8z"/></svg>
  <div class="ct" style="left:261px;top:14.7px;width:210px;letter-spacing:.15px;-webkit-mask-image:linear-gradient(90deg,#000 185px,transparent 210px)">indi-engine/newapp: Entry point</div>
  <svg style="left:485px;top:18px" width="12" height="12" viewBox="0 0 12 12"><path d="M1.5 1.5 L10.5 10.5 M10.5 1.5 L1.5 10.5" stroke="#dcdcdc" stroke-width="2"/></svg>
  <!-- active tab -->
  <div style="left:519px;top:6px;width:291px;height:43px;background:#3c3c3c;border-radius:11px 11px 0 0"></div>
  <svg style="left:507px;top:37px" width="12" height="12" viewBox="0 0 10 10"><path d="M10 0 L10 10 L0 10 A10 10 0 0 0 10 0Z" fill="#3c3c3c"/></svg>
  <svg style="left:810px;top:37px" width="12" height="12" viewBox="0 0 10 10"><path d="M0 0 L0 10 L10 10 A10 10 0 0 1 0 0Z" fill="#3c3c3c"/></svg>
  <div style="left:529px;top:14px;width:11px;height:11px;background:#ececec"></div>
  <div style="left:538px;top:23px;width:11px;height:11px;background:#5aaeea"></div>
  <div class="ct" style="left:559px;top:14.7px;color:#e6e6e6">Indi Engine</div>
  <svg style="left:782px;top:18px" width="12" height="12" viewBox="0 0 12 12"><path d="M1.5 1.5 L10.5 10.5 M10.5 1.5 L1.5 10.5" stroke="#e6e6e6" stroke-width="2"/></svg>
  <!-- tab 3 github -->
  <svg class="gh" style="left:825.7px;top:13.5px" width="20.5" height="20.5" viewBox="0 0 16 16"><path fill="#fff" d="M8 0C3.58 0 0 3.58 0 8c0 3.54 2.29 6.53 5.47 7.59.4.07.55-.17.55-.38 0-.19-.01-.82-.01-1.49-2.01.37-2.53-.49-2.69-.94-.09-.23-.48-.94-.82-1.13-.28-.15-.68-.52-.01-.53.63-.01 1.08.58 1.23.82.72 1.21 1.87.87 2.33.66.07-.52.28-.87.51-1.07-1.78-.2-3.64-.89-3.64-3.95 0-.87.31-1.59.82-2.15-.08-.2-.36-1.02.08-2.12 0 0 .67-.21 2.2.82.64-.18 1.32-.27 2-.27s1.36.09 2 .27c1.53-1.04 2.2-.82 2.2-.82.44 1.1.16 1.92.08 2.12.51.56.82 1.27.82 2.15 0 3.07-1.87 3.75-3.65 3.95.29.25.54.73.54 1.48 0 1.07-.01 1.93-.01 2.2 0 .21.15.46.55.38A8.013 8.013 0 0016 8c0-4.42-3.58-8-8-8z"/></svg>
  <div class="ct" style="left:856.5px;top:14.7px;width:210px;letter-spacing:-.3px;-webkit-mask-image:linear-gradient(90deg,#000 185px,transparent 210px)">Releases · pavel-perminov/myapp</div>
  <svg style="left:1081px;top:18px" width="12" height="12" viewBox="0 0 12 12"><path d="M1.5 1.5 L10.5 10.5 M10.5 1.5 L1.5 10.5" stroke="#dcdcdc" stroke-width="2"/></svg>
  <div class="tdiv" style="left:1109px"></div>
  <!-- tab 4 ai studio -->
  <div style="left:1124px;top:14px;width:20.5px;height:19.5px;background:#0a0a0a;border-radius:1px"></div>
  <svg style="left:1124px;top:13.5px" width="20.5" height="20.5" viewBox="0 0 21 21"><path d="M11 5.5 H7.5 Q5.5 5.5 5.5 7.5 V13.5 Q5.5 15.5 7.5 15.5 H13.5 Q15.5 15.5 15.5 13.5 V10.5" fill="none" stroke="#f2f2f2" stroke-width="1.3"/><path d="M14.2 3.2 Q14.6 6.4 17.8 6.8 Q14.6 7.2 14.2 10.4 Q13.8 7.2 10.6 6.8 Q13.8 6.4 14.2 3.2Z" fill="#f2f2f2"/></svg>
  <div class="ct" style="left:1154px;top:14.7px">Google AI Studio</div>
  <svg style="left:1378px;top:18px" width="12" height="12" viewBox="0 0 12 12"><path d="M1.5 1.5 L10.5 10.5 M10.5 1.5 L1.5 10.5" stroke="#dcdcdc" stroke-width="2"/></svg>
  <div class="tdiv" style="left:1407px"></div>
  <svg style="left:1423px;top:17px" width="14" height="14" viewBox="0 0 14 14"><path d="M7 0.5 V13.5 M0.5 7 H13.5" stroke="#e6e6e6" stroke-width="1.8"/></svg>
  <!-- window controls -->
  <svg style="left:1770px;top:16px" width="14" height="14" viewBox="0 0 14 14"><path d="M0 6.5 H14" stroke="#e6e6e6" stroke-width="1.3"/></svg>
  <svg style="left:1826px;top:17px" width="13" height="13.9" viewBox="0 0 14 15"><rect x="0.7" y="3.7" width="10" height="10" rx="2" fill="none" stroke="#e6e6e6" stroke-width="1.3"/><path d="M3.2 1.4 Q3.6 .7 5 .7 H10.5 Q13.3 .7 13.3 3.5 V9 Q13.3 10.3 12.6 10.8" fill="none" stroke="#e6e6e6" stroke-width="1.3"/></svg>
  <svg style="left:1884px;top:17px" width="13.2" height="13.2" viewBox="0 0 14 14"><path d="M0.5 0.5 L13.5 13.5 M13.5 0.5 L0.5 13.5" stroke="#e6e6e6" stroke-width="1.3"/></svg>
</div>
<div id="toolbar"><div style="left:0;top:-1px;width:1917px;height:60px">
  <div style="left:0;top:1px;width:12px;height:12px;background:#1f2020"></div><div style="left:1905px;top:1px;width:12px;height:12px;background:#1f2020"></div><div style="left:1893px;top:1px;width:24px;height:24px;background:#3c3c3c;border-radius:0 10px 0 0"></div>
  <div style="left:0;top:1px;width:24px;height:24px;background:#3c3c3c;border-radius:10px 0 0 0"></div>
  <div style="left:0;top:57.5px;width:1917px;height:2.5px;background:#484848"></div>
  <!-- back -->
  <svg style="left:18px;top:21px" width="17" height="17" viewBox="0 0 17 17"><path d="M16 8.5 H2 M8.5 1.5 L1.5 8.5 L8.5 15.5" fill="none" stroke="#c9c9c9" stroke-width="1.9"/></svg>
  <svg style="left:63px;top:21px" width="17" height="17" viewBox="0 0 17 17"><path d="M1 8.5 H15 M8.5 1.5 L15.5 8.5 L8.5 15.5" fill="none" stroke="#7b7b7b" stroke-width="1.9"/></svg>
  <svg style="left:108px;top:20px" width="18" height="18" viewBox="0 0 18 18"><path d="M15.6 9.4 A6.7 6.7 0 1 1 13.4 4.2" fill="none" stroke="#c9c9c9" stroke-width="1.9"/><path d="M15.6 1.4 V6.6 H10.4" fill="none" stroke="#c9c9c9" stroke-width="1.9"/></svg>
  <!-- omnibox -->
  <div style="left:149px;top:9px;width:1597px;height:42px;border-radius:21px;background:#282828"></div>
  <div style="left:155px;top:15px;width:30px;height:30px;border-radius:15px;background:#3c3c3c"></div>
  <svg style="left:161px;top:21px" width="18" height="18" viewBox="0 0 18 18"><circle cx="4.3" cy="4.7" r="2.3" fill="none" stroke="#e3e3e3" stroke-width="1.6"/><path d="M9 4.7 H16.5" stroke="#e3e3e3" stroke-width="1.6"/><circle cx="13.7" cy="13.3" r="2.3" fill="none" stroke="#e3e3e3" stroke-width="1.6"/><path d="M1.5 13.3 H9" stroke="#e3e3e3" stroke-width="1.6"/></svg>
  <div class="t" style="left:195.5px;top:20.2px;font-size:17.5px;letter-spacing:0;color:#e8e8e8;line-height:22px;height:22px;transform:none">app1.indi-engine.ai</div>
  <!-- star -->
  <svg style="left:1705.5px;top:18.5px" width="22" height="22" viewBox="0 0 24 24"><path d="M12 3.2 L14.6 9.2 L21 9.8 L16.1 14.1 L17.6 20.5 L12 17.1 L6.4 20.5 L7.9 14.1 L3 9.8 L9.4 9.2 Z" fill="none" stroke="#d6d6d6" stroke-width="1.9" stroke-linejoin="round"/></svg>
  <!-- puzzle -->
  <svg style="left:1768px;top:16px" width="26.4" height="26.4" viewBox="0 0 24 24"><path d="M3 6 H8.8 A1.7 1.7 0 0 1 12.2 6 H18 V11.8 A1.7 1.7 0 0 1 18 15.2 V21 H3 V15.2 A1.9 1.9 0 0 0 3 11.8 Z" fill="none" stroke="#d6d6d6" stroke-width="1.7" stroke-linejoin="round"/></svg>
  <div style="left:1812px;top:20px;width:2px;height:20px;background:#5a5a5a;border-radius:1px"></div>
  <div style="left:1834px;top:16.6px;width:25px;height:25px;border-radius:13px;background:#7f93a6"></div>
  <div class="t" style="left:1834px;top:19.1px;width:25px;text-align:center;font-size:13.5px;letter-spacing:0;color:#fff;transform:none">P</div>
  <svg style="left:1888.5px;top:20px" width="6" height="19.4" viewBox="0 0 6 20"><circle cx="3" cy="3" r="1.7" fill="#e3e3e3"/><circle cx="3" cy="10" r="1.7" fill="#e3e3e3"/><circle cx="3" cy="17" r="1.7" fill="#e3e3e3"/></svg>
</div></div>
<div id="dlg" style="left:678px;top:346px;width:562px;height:436px;background:#72b6ee"></div>
<div style="left:683px;top:376px;width:552px;height:363px;background:#fff"></div>
<div style="left:683px;top:739px;width:552px;height:38px;background:#ececec"></div>
<div class="t" style="left:689px;top:350px;color:#e9f3fc;transform:scaleX(.964)">Restore » Please choose the restore scenario and backup version</div>
<svg style="left:1214px;top:350px" width="22" height="22" viewBox="0 0 22 22"><circle cx="11" cy="11" r="10" fill="#e8f2fb"/><path d="M6 6L16 16M16 6L6 16" stroke="#72b6ee" stroke-width="2.4"/></svg>
<!-- radios -->
<svg style="left:699px;top:390px" width="21" height="21" viewBox="0 0 21 21"><circle cx="10.5" cy="10.5" r="8.6" fill="#fff" stroke="#b2b2b2" stroke-width="2"/><circle cx="10.5" cy="10.5" r="5" fill="#aaa"/></svg>
<svg style="left:699px;top:416px" width="21" height="21" viewBox="0 0 21 21"><circle cx="10.5" cy="10.5" r="8.6" fill="#fff" stroke="#b2b2b2" stroke-width="2"/></svg>
<svg style="left:699px;top:442px" width="21" height="21" viewBox="0 0 21 21"><circle cx="10.5" cy="10.5" r="8.6" fill="#fff" stroke="#b2b2b2" stroke-width="2"/></svg>
<div class="t d" style="left:724px;top:390px">Full restore (source code, database and uploads)</div>
<div class="t d" style="left:724px;top:416px">Restore only database state</div>
<div class="t d" style="left:724px;top:442px">Restore only file uploads</div>
<!-- grid -->
<div style="left:695px;top:477px;width:528px;height:27px;background:#efefef;border-bottom:1px solid #c8c8c8"></div>
<div style="left:959px;top:477px;width:1px;height:26px;background:#d0d0d0"></div>
<div style="left:1022px;top:477px;width:1px;height:26px;background:#d0d0d0"></div>
<div style="left:1072px;top:477px;width:1px;height:26px;background:#d0d0d0"></div>
<div class="t d" style="left:703px;top:480px">Backup version</div>
<div class="t d" style="left:968px;top:480px">Type</div>
<div class="t d" style="left:1030px;top:480px">Tag</div>
<div class="t d" style="left:1080px;top:480px">Published</div>
<div style="left:695px;top:530px;width:528px;height:27.5px;background:#e7fce1"></div>
<div class="t d" style="left:703px;top:506px">Staging · C0 · 19 Oct 25, 15:36</div>
<div class="t d" style="left:968px;top:506px;color:#3d7a1f">Latest</div>
<div class="t d" style="left:1030px;top:506px">sc0</div>
<div class="t d" style="left:1080px;top:506px">about 16 seconds ago</div>
<div class="t d" style="left:703px;top:533px">Staging · C1 · 19 Oct 25, 15:31</div>
<div class="t d" style="left:1030px;top:533px">sc1</div>
<div class="t d" style="left:1080px;top:533px">about 5 minutes ago</div>
<!-- buttons -->
<div style="left:862px;top:747px;width:93px;height:22px;background:#5588b5"></div>
<div class="t" style="left:862px;width:93px;top:748px;text-align:center;color:#e6eef6;">OK</div>
<div style="left:963px;top:747px;width:94px;height:22px;background:#72b6ee"></div>
<div class="t" style="left:963px;width:94px;top:748px;text-align:center;color:#f0f7fd;">Cancel</div>
<!-- toasts -->
<div class="toast" style="left:12px;top:920px;width:375px;height:28px"></div>
<div class="toast" style="left:12px;top:950px;width:375px;height:28px"></div>
<div class="toast" style="left:12px;top:980px;width:375px;height:28px"></div>
<div class="t tt" style="left:12px;width:375px;text-align:center;top:925px">Hide all</div>
<div class="t tt" style="left:16px;top:955.5px">Connected in 1793 ms</div>
<div class="t tt" style="left:16px;top:985.5px">Loading list of backups available on github...</div>
<svg style="left:372px;top:955px" width="10" height="10" viewBox="0 0 10 10"><path d="M1 1L9 9M9 1L1 9" stroke="#fff" stroke-width="2.4"/></svg>
<svg style="left:372px;top:985px" width="10" height="10" viewBox="0 0 10 10"><path d="M1 1L9 9M9 1L1 9" stroke="#fff" stroke-width="2.4"/></svg>
<!-- cursor -->
<svg style="left:896.6px;top:756.6px" width="19" height="24.6" viewBox="0 0 20 26"><path d="M6.2 1.2 Q8.6 1.2 8.6 3.4 V10 L9.2 8.8 Q11.2 8 11.8 9.8 L12.4 9.4 Q14.4 8.8 14.9 10.8 L15.4 10.6 Q17.6 10.4 17.6 12.8 V17.5 Q17.6 21.5 15.6 23.6 Q12.5 26 8.4 24 Q5.5 20.5 1.8 15.6 Q0.8 13.6 2.8 13.2 Q3.6 13.2 4 14 V3.4 Q4 1.2 6.2 1.2Z" fill="#fff" stroke="#10131c" stroke-width="1.5" stroke-linejoin="round"/><path d="M8.6 10V14M11.8 10.5V14M14.9 11.5V14.5" stroke="#10131c" stroke-width="1.2"/></svg>
<div id="taskbar" style="left:0;top:1019px;width:1917px;height:58px;background:linear-gradient(90deg,#222226 0,#25252a 200px,#292a21 300px,#2c2e1c 400px,#283020 500px,#1f2c29 580px,#1a2a2c 700px,#1a282a 1300px,#1f2927 1500px,#242821 1700px,#2b2a1c 1917px)"></div>
<div style="left:0;top:1019px;width:1917px;height:58px;background:linear-gradient(180deg,rgba(255,255,255,.06) 0,rgba(255,255,255,.06) 1px,rgba(0,0,0,0) 1px,rgba(0,0,0,.15) 100%)"></div>
<!-- start -->
<svg style="left:642px;top:1035px" width="29" height="29" viewBox="0 0 29 29"><defs><linearGradient id="wg" gradientUnits="userSpaceOnUse" x1="0" y1="0" x2="29" y2="29"><stop offset="0" stop-color="#7fe6fc"/><stop offset="1" stop-color="#149df0"/></linearGradient></defs><rect x="0" y="0" width="14" height="14" rx="1" fill="url(#wg)"/><rect x="15" y="0" width="14" height="14" rx="1" fill="url(#wg)"/><rect x="0" y="15" width="14" height="14" rx="1" fill="url(#wg)"/><rect x="15" y="15" width="14" height="14" rx="1" fill="url(#wg)"/></svg>
<!-- chrome -->
<div style="left:688px;top:1024px;width:50px;height:50px;border-radius:6px;background:#23363a;border:1px solid #2b3e42"></div>
<svg style="left:697.7px;top:1033.8px" width="30.6" height="30.6" viewBox="0 0 48 48"><path d="M13.61 30L3.22 12A24 24 0 0 1 44.78 12L24 12Z" fill="#e94335"/><path d="M24 12L44.78 12A24 24 0 0 1 24 48L34.39 30Z" fill="#fbbc04"/><path d="M34.39 30L24 48A24 24 0 0 1 3.22 12L13.61 30Z" fill="#34a853"/><circle cx="24" cy="24" r="11.9" fill="#fff"/><circle cx="24" cy="24" r="9.3" fill="#4285f4"/></svg>
<div style="left:703px;top:1068.5px;width:20px;height:4px;border-radius:2px;background:#4cc2ff"></div>
<!-- far manager like -->
<svg style="left:753px;top:1034px" width="28.2" height="29" viewBox="0 0 29 30"><rect x=".5" y=".5" width="28" height="24" fill="#0000c8" stroke="#00e5e5"/><path d="M14.5 1V24M10 1V24M23.5 1V24" stroke="#00e5e5" stroke-width="1"/><path d="M2.5 3H8M2.5 6H8M2.5 9H8M2.5 12H8M16.5 3H22M16.5 6H22M16.5 9H22M11.5 3H13M11.5 6H13M11.5 9H13M25 3H27M25 6H27" stroke="#28b9ff" stroke-width="1.2"/><path d="M2.5 3H8M16.5 3H22" stroke="#e7d04a" stroke-width="1.2"/><path d="M2 21.5H27" stroke="#00e5e5" stroke-width="1"/><path d="M1 27.5H28" stroke="#009c9c" stroke-width="2.4" stroke-dasharray="3.2 1"/></svg>
<!-- slack -->
<svg style="left:809px;top:1034px" width="29" height="29" viewBox="0 0 29 29"><circle cx="14.5" cy="14.5" r="14.5" fill="#fff"/><g stroke-linecap="round" stroke-width="3.4"><path d="M11.5 5.5V11" stroke="#36c5f0"/><path d="M5.5 11.6H11" stroke="#36c5f0"/><path d="M17.6 5.5V11" stroke="#2eb67d"/><path d="M18 11.6H23.5" stroke="#2eb67d" stroke-width="0"/><path d="M23.4 11.5H23.5" stroke="#2eb67d"/><path d="M17.5 18V23.5" stroke="#ecb22e"/><path d="M18 17.4H23.5" stroke="#ecb22e"/><path d="M11.4 18V23.5" stroke="#e01e5a"/><path d="M5.5 17.5H5.6" stroke="#e01e5a"/></g></svg>
<!-- phpstorm -->
<svg style="left:863px;top:1034px" width="31" height="31" viewBox="0 0 31 31"><defs><linearGradient id="pg1" x1="0" y1="0" x2="1" y2="0"><stop offset="0" stop-color="#d23ae0"/><stop offset=".5" stop-color="#ff2d8e"/><stop offset="1" stop-color="#e83aa8"/></linearGradient><linearGradient id="pg2" x1="0" y1="0" x2="0" y2="1"><stop offset="0" stop-color="#c145ee"/><stop offset="1" stop-color="#7d5cff"/></linearGradient><linearGradient id="pg3" x1="0" y1="0" x2="1" y2="1"><stop offset="0" stop-color="#b548f0"/><stop offset="1" stop-color="#7440c8"/></linearGradient></defs><path d="M4.3 .3L15.8 2.6L15.2 6.4H6L3.7 7.4L.3 5.5Z" fill="url(#pg1)"/><path d="M.3 5.5L6 6V23.4L2.6 22.7Z" fill="url(#pg2)"/><path d="M18 2.3L26.1 3.4L30.1 12.3L26.1 16.6H24V6H15.6Z" fill="url(#pg3)"/><path d="M6 23.6H24V16.4L26.7 16.9L30.1 22.7L18.4 30.1L8.3 26.1Z" fill="#8756ff"/><rect x="5.8" y="5.8" width="18.3" height="18.2" fill="#050505"/><rect x="7.2" y="21.1" width="8" height="1.3" fill="#e8e8e8"/></svg>
<div class="t" style="left:869.5px;top:1040.5px;font-size:10px;font-weight:bold;color:#fff;letter-spacing:.4px;line-height:12px;height:12px;transform:none">PS</div>
<!-- dolphin -->
<svg style="left:920.5px;top:1033.8px" width="26" height="31" viewBox="0 0 26 31"><path d="M.2 14.4 Q1.6 12 4 10 Q6.8 7 9.8 5.6 Q12.6 2.4 15.6 .4 L17.2 .6 L17.3 5.4 Q20.6 6.8 22.6 9.8 Q24.8 12.6 24.7 15.4 Q24.8 18.6 23.4 21.6 Q22.2 24.6 20.6 26.8 Q19.4 29 17.8 30.1 Q16.4 30.2 15.8 29.2 Q15.2 27.4 15.5 25.5 Q14 24 12.9 22.1 Q12.3 21 12.7 20.6 Q13.6 20 14.9 19.8 Q16.6 19.8 17.8 19.2 Q18.9 18.6 18.6 17.8 Q18.4 16.6 17.5 15.7 L16.6 16.4 Q15.2 16.4 14.3 15.8 Q13.6 15 13.2 14.3 Q11.6 13.8 9.8 13.8 Q6.8 14.2 4 15.2 Q2.4 15.8 1.1 15.8 Q.1 15.4 .2 14.4Z" fill="#2b8cff"/></svg>
<!-- lock arrows -->
<svg style="left:972px;top:1033px" width="33" height="32" viewBox="0 0 33 32"><path d="M1 1H9L6.5 3.5L12 9L9 12L3.5 6.5L1 9Z" fill="#2f9be8"/><path d="M9 15V11A6 6 0 0 1 21 11V15" fill="none" stroke="#d8d8d8" stroke-width="3"/><rect x="7" y="14" width="16" height="11" rx="1.5" fill="#c9c9c9"/><path d="M32 31H23L26 28L19 21L22 18L29 25L32 22Z" fill="#4dc02c"/></svg>
<!-- photoshop -->
<svg style="left:1030px;top:1035px" width="28" height="27" viewBox="0 0 28 27"><rect x="1" y="1" width="26" height="25" rx="5" fill="#0b1c2c" stroke="#31c5f4" stroke-width="1.8"/></svg>
<div class="t" style="left:1030px;width:28px;text-align:center;top:1039px;font-size:15px;font-weight:bold;color:#cfeeff;letter-spacing:-.5px;transform:scaleX(.9)">Ps</div>
<!-- git -->
<svg style="left:1082px;top:1033px" width="32" height="32" viewBox="0 0 32 32"><g transform="rotate(45 16 16)"><rect x="5" y="5" width="10.5" height="10.5" rx="1.5" fill="#ef7d7d"/><rect x="16.5" y="5" width="10.5" height="10.5" rx="1.5" fill="#7cc35a"/><rect x="5" y="16.5" width="10.5" height="10.5" rx="1.5" fill="#7aa9ee"/><rect x="16.5" y="16.5" width="10.5" height="10.5" rx="1.5" fill="#f1dc7a"/></g><path d="M14 6L16 12V23M16 15L22 17" stroke="#111" stroke-width="1.8" fill="none"/><circle cx="16" cy="23.5" r="2" fill="#111"/><circle cx="22.5" cy="17.2" r="2" fill="#111"/></svg>
<!-- calculator -->
<svg style="left:1140px;top:1033px" width="24" height="31" viewBox="0 0 24 31"><rect width="24" height="31" rx="2.5" fill="#6f7f90"/><rect x="3" y="3" width="18" height="5" fill="#4fc3f0"/><g fill="#cfd6de"><rect x="3" y="11" width="5" height="4.6"/><rect x="9.5" y="11" width="5" height="4.6"/><rect x="16" y="11" width="5" height="4.6"/><rect x="3" y="17.3" width="5" height="4.6"/><rect x="9.5" y="17.3" width="5" height="4.6"/><rect x="3" y="23.6" width="5" height="4.6"/><rect x="9.5" y="23.6" width="5" height="4.6"/></g><rect x="16" y="17.3" width="5" height="10.9" fill="#123e8c"/></svg>
<!-- monitor -->
<svg style="left:1192px;top:1036px" width="31" height="26" viewBox="0 0 31 26"><rect x="1" y="1" width="29" height="18" fill="#fff" stroke="#8a8a8a" stroke-width="1.6"/><path d="M11 19H20V22.5H24V25H7V22.5H11Z" fill="#8a8a8a"/><path d="M12 6V8M19 6V8M11 11Q15.5 15 20 11" stroke="#777" stroke-width="1" fill="none"/></svg>
<div style="left:1204px;top:1069px;width:7px;height:3px;border-radius:2px;background:#8c9597"></div>
<!-- network -->
<svg style="left:1248px;top:1033px" width="32" height="32" viewBox="0 0 32 32"><rect x="13" y="1" width="13" height="10" fill="#c8c8c8" stroke="#333" stroke-width=".8"/><rect x="15" y="3" width="9" height="6" fill="#0b2fd0"/><path d="M11 12H28L30 16H13Z" fill="#dcdcdc" stroke="#333" stroke-width=".6"/><rect x="3" y="15" width="13" height="10" fill="#c8c8c8" stroke="#333" stroke-width=".8"/><rect x="5" y="17" width="9" height="6" fill="#0b2fd0"/><path d="M1 26H18L20 30H1Z" fill="#dcdcdc" stroke="#333" stroke-width=".6"/><path d="M21 8L11 16H15L9 23L21 14H16Z" fill="#ffe21a"/></svg>
<div style="left:1260px;top:1069px;width:7px;height:3px;border-radius:2px;background:#8c9597"></div>
<!-- tray -->
<svg style="left:1600px;top:1044px" width="16" height="10" viewBox="0 0 16 10"><path d="M1.5 8.5L8 2L14.5 8.5" fill="none" stroke="#fff" stroke-width="1.8"/></svg>
<div class="t tb" style="left:1642px;top:1039px;transform:scaleX(.89)">ENG</div>
<svg style="left:1692px;top:1040px" width="22" height="17" viewBox="0 0 22 17"><g fill="none" stroke="#fff" stroke-width="1.7" stroke-linecap="round"><path d="M1.5 6A13.5 13.5 0 0 1 20.5 6"/><path d="M4.6 9.4A9 9 0 0 1 17.4 9.4"/><path d="M7.8 12.6A4.6 4.6 0 0 1 14.2 12.6"/></g><circle cx="11" cy="15.3" r="1.5" fill="#fff"/></svg>
<svg style="left:1722px;top:1040px" width="22" height="18" viewBox="0 0 22 18"><path d="M1.5 6.5H4.5L9 2.5V15.5L4.5 11.5H1.5Z" fill="none" stroke="#fff" stroke-width="1.5" stroke-linejoin="round"/><path d="M12 6Q13.6 9 12 12" fill="none" stroke="#fff" stroke-width="1.4"/><path d="M15 3.5Q18 9 15 14.5" fill="none" stroke="#aaa" stroke-width="1.3"/><path d="M18 1.5Q22 9 18 16.5" fill="none" stroke="#666" stroke-width="1.2"/></svg>
<svg style="left:1752px;top:1038px" width="24" height="20" viewBox="0 0 24 20"><rect x="2.2" y="6.2" width="17" height="10.6" rx="2.6" fill="none" stroke="#fff" stroke-width="1.6"/><path d="M20.2 9.5H21.5Q22.3 9.5 22.3 10.3V12.7Q22.3 13.5 21.5 13.5H20.2" fill="#fff"/><rect x="5" y="8.6" width="11.6" height="5.8" rx="1" fill="#fff"/><path d="M5.5 0.5L1 8H4L2.5 13L8 5.5H5Z" fill="#fff" stroke="#232a26" stroke-width="1"/></svg>
<div class="t tb" style="left:1784px;width:81px;text-align:right;top:1029px">18:37</div>
<div class="t tb" style="left:1764px;width:101px;text-align:right;top:1049px">19.10.2025</div>
<svg style="left:1875px;top:1038px" width="22" height="22" viewBox="0 0 22 22"><path d="M10 3A6 6 0 0 0 4 9V14L2 17H18L16 14V11" fill="#fff"/><path d="M10 3A6 6 0 0 1 13 4" fill="none" stroke="#fff" stroke-width="1.5"/><path d="M8 18.5A2.2 2.2 0 0 0 12 18.5Z" fill="#fff"/><path d="M9 8H12.5L9 12.5H12.5M14.5 3.5H18L14.5 8H18" fill="none" stroke="#2a2a22" stroke-width="1.4"/><path d="M14.5 2.5H18.5L14.5 7.5H18.5" fill="none" stroke="#fff" stroke-width="1.4"/></svg>
</body></html>
